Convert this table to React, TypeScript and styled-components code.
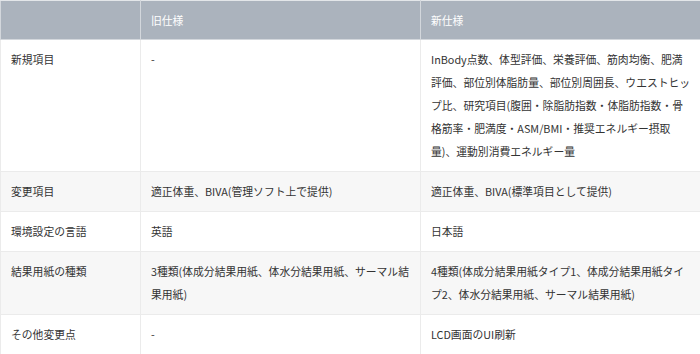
import React from "react";
import styled, { createGlobalStyle } from "styled-components";

const GlobalStyle = createGlobalStyle`
  html, body {
    margin: 0;
    padding: 0;
    background: #ffffff;
  }
  body {
    font-family: "Noto Sans CJK JP", "Noto Sans", sans-serif;
  }
`;

const Table = styled.table`
  width: 700px;
  border-collapse: collapse;
  table-layout: fixed;
  font-size: 10.8px;
  color: #333333;
`;

const HeadCell = styled.th`
  background: #abb3bd;
  color: #ffffff;
  font-weight: normal;
  text-align: left;
  height: 39px;
  padding: 0 10px;
  border: 1px solid #d3d7dc;
  border-top-color: #e3e6e9;
  box-sizing: border-box;
`;

const Row = styled.tr<{ $shaded?: boolean }>`
  background: ${({ $shaded }) => ($shaded ? "#f7f7f7" : "#ffffff")};
`;

const Cell = styled.td`
  vertical-align: top;
  padding: 8px 10px;
  line-height: 23px;
  border: 1px solid #ebebeb;
  white-space: nowrap;
`;

type Item = { label: string; before: React.ReactNode; after: React.ReactNode };

const items: Item[] = [
  {
    label: "新規項目",
    before: "-",
    after: (
      <>
        InBody点数、体型評価、栄養評価、筋肉均衡、肥満
        <br />
        評価、部位別体脂肪量、部位別周囲長、ウエストヒッ
        <br />
        プ比、研究項目(腹囲・除脂肪指数・体脂肪指数・骨
        <br />
        格筋率・肥満度・ASM/BMI・推奨エネルギー摂取
        <br />
        量)、運動別消費エネルギー量
      </>
    ),
  },
  {
    label: "変更項目",
    before: "適正体重、BIVA(管理ソフト上で提供)",
    after: "適正体重、BIVA(標準項目として提供)",
  },
  { label: "環境設定の言語", before: "英語", after: "日本語" },
  {
    label: "結果用紙の種類",
    before: (
      <>
        3種類(体成分結果用紙、体水分結果用紙、サーマル結
        <br />
        果用紙)
      </>
    ),
    after: (
      <>
        4種類(体成分結果用紙タイプ1、体成分結果用紙タイ
        <br />
        プ2、体水分結果用紙、サーマル結果用紙)
      </>
    ),
  },
  { label: "その他変更点", before: "-", after: "LCD画面のUI刷新" },
];

export default function App() {
  return (
    <>
      <GlobalStyle />
      <Table>
        <colgroup>
          <col style={{ width: 140 }} />
          <col style={{ width: 280 }} />
          <col style={{ width: 280 }} />
        </colgroup>
        <thead>
          <tr>
            <HeadCell />
            <HeadCell>旧仕様</HeadCell>
            <HeadCell>新仕様</HeadCell>
          </tr>
        </thead>
        <tbody>
          {items.map((item, i) => (
            <Row key={item.label} $shaded={i % 2 === 1}>
              <Cell>{item.label}</Cell>
              <Cell>{item.before}</Cell>
              <Cell>{item.after}</Cell>
            </Row>
          ))}
        </tbody>
      </Table>
    </>
  );
}
